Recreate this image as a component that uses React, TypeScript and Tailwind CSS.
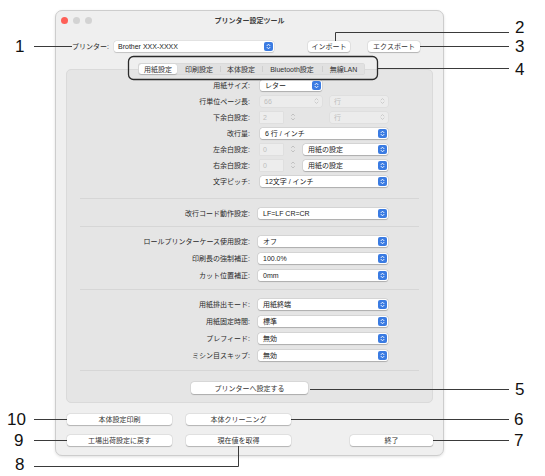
import React from "react";

const FONT = "font-['Liberation_Sans','Noto_Sans_CJK_JP',sans-serif]";

function BlueChev() {
  return (
    <span className="w-[9px] h-[9px] rounded-[2px] bg-[#3a7be2] flex items-center justify-center shrink-0">
      <svg width="5" height="7" viewBox="0 0 5 7">
        <path d="M1 2.7 L2.5 1.2 L4 2.7 M1 4.3 L2.5 5.8 L4 4.3" stroke="white" strokeWidth="0.9" fill="none" strokeLinecap="round" strokeLinejoin="round" />
      </svg>
    </span>
  );
}

function GrayChev() {
  return (
    <svg width="5" height="8" viewBox="0 0 5 8" className="shrink-0">
      <path d="M1 3 L2.5 1.5 L4 3 M1 5 L2.5 6.5 L4 5" stroke="#c4c4c4" strokeWidth="0.8" fill="none" strokeLinecap="round" strokeLinejoin="round" />
    </svg>
  );
}

function Popup({ text, cls }: { text: string; cls: string }) {
  return (
    <div className={`${cls} h-[11px] bg-white rounded-[2.5px] shadow-[0_0_0_0.5px_rgba(0,0,0,0.1),0_0.5px_1px_rgba(0,0,0,0.2)] flex items-center justify-between pl-[5px] pr-[1px]`}>
      <span className="text-[7px] leading-none text-[#222] whitespace-nowrap">{text}</span>
      <BlueChev />
    </div>
  );
}

function DisCombo({ text, cls }: { text: string; cls: string }) {
  return (
    <div className={`${cls} h-[11px] bg-[#ececec] rounded-[2px] shadow-[0_0_0_0.5px_rgba(0,0,0,0.05)] flex items-center justify-between pl-[4px] pr-[3px]`}>
      <span className="text-[7px] leading-none text-[#bdbdbd]">{text}</span>
      <GrayChev />
    </div>
  );
}

function Field({ text }: { text: string }) {
  return (
    <div className="w-[23px] h-[11px] bg-[#ededed] shadow-[0_0_0_0.5px_rgba(0,0,0,0.05)] flex items-center pl-[3px]">
      <span className="text-[7px] leading-none text-[#bdbdbd]">{text}</span>
    </div>
  );
}

function Stepper() {
  return (
    <div className="w-[7px] h-[11px] flex items-center justify-center">
      <svg width="6" height="10" viewBox="0 0 6 10">
        <path d="M1.5 3.5 L3 2 L4.5 3.5 M1.5 6.5 L3 8 L4.5 6.5" stroke="#b8b8b8" strokeWidth="0.8" fill="none" strokeLinecap="round" strokeLinejoin="round" />
      </svg>
    </div>
  );
}

function Row({ label, h, ml, children }: { label: string; h: string; ml: string; children: React.ReactNode }) {
  return (
    <div className={`flex items-center ${h}`}>
      <div className="w-[183px] text-right text-[7px] leading-none text-[#2a2a2a] whitespace-nowrap">{label}</div>
      <div className={`flex items-center ${ml}`}>{children}</div>
    </div>
  );
}

function Sep({ mt }: { mt: string }) {
  return <div className={`${mt} mx-[13px] h-px bg-[#d6d6d6]`} />;
}

function Btn({ text, cls }: { text: string; cls: string }) {
  return (
    <div className={`${cls} h-[11px] bg-white rounded-[3px] shadow-[0_0_0_0.5px_rgba(0,0,0,0.08),0_0.5px_1px_rgba(0,0,0,0.22)] flex items-center justify-center`}>
      <span className="text-[7px] leading-none text-[#333] whitespace-nowrap">{text}</span>
    </div>
  );
}

function Tab({ text, w, sel, divider }: { text: string; w: string; sel?: boolean; divider?: boolean }) {
  return (
    <div className={`${w} h-full relative flex items-center justify-center`}>
      {sel ? (
        <div className="absolute inset-[1px] bg-white rounded-[2.5px] shadow-[0_0.5px_1px_rgba(0,0,0,0.2)]" />
      ) : null}
      {divider ? <div className="absolute left-0 top-[3px] bottom-[3px] w-px bg-[#cfcfcf]" /> : null}
      <span className="relative text-[7px] leading-none text-[#333] whitespace-nowrap">{text}</span>
    </div>
  );
}

function Num({ n, x, y }: { n: string; x: number; y: number }) {
  return (
    <div
      className="absolute text-[17px] leading-none text-[#111] font-['Liberation_Sans',sans-serif]"
      style={{ left: x, top: y - 8.3 }}
    >
      {n}
    </div>
  );
}

export default function App() {
  return (
    <div className={`relative w-[545px] h-[476px] bg-white overflow-hidden ${FONT}`}>
      <div className="pt-[10px] pl-[55px]">
        <div className="w-[389px] h-[446px] bg-[#efefef] rounded-[7px] border border-[#cdcdcd] shadow-[0_1px_3px_rgba(0,0,0,0.12)] flex flex-col">
          {/* Title bar */}
          <div className="h-[19px] grid grid-cols-[1fr_auto_1fr] items-center">
            <div className="flex items-center gap-[5px] pl-[5px]">
              <span className="w-[7px] h-[7px] rounded-full bg-[#fe5f57]" />
              <span className="w-[7px] h-[7px] rounded-full bg-[#d3d3d3]" />
              <span className="w-[7px] h-[7px] rounded-full bg-[#d3d3d3]" />
            </div>
            <div className="text-[7px] leading-none font-semibold text-[#3a3a3a]">プリンター設定ツール</div>
            <div />
          </div>

          {/* Printer row */}
          <div className="mt-[11px] h-[11px] flex items-center">
            <div className="w-[53px] text-right text-[7px] leading-none text-[#2a2a2a]">プリンター:</div>
            <div className="ml-[5px] w-[160px] h-[11px] bg-white rounded-[2.5px] shadow-[0_0_0_0.5px_rgba(0,0,0,0.08),0_0.5px_1px_rgba(0,0,0,0.15)] flex items-center justify-between pl-[4px] pr-[1px]">
              <span className="text-[7px] leading-none text-[#222]">Brother XXX-XXXX</span>
              <BlueChev />
            </div>
            <Btn text="インポート" cls="ml-[34px] w-[42px]" />
            <Btn text="エクスポート" cls="ml-[18px] w-[52px]" />
          </div>

          {/* Tabs */}
          <div className="mt-[11px] ml-[82px] w-[227px] h-[12px] bg-[#e1e1e1] rounded-[3px] shadow-[inset_0_0_0_0.5px_rgba(0,0,0,0.06)] flex relative z-10">
            <Tab text="用紙設定" w="w-[40px]" sel />
            <Tab text="印刷設定" w="w-[42px]" />
            <Tab text="本体設定" w="w-[42px]" divider />
            <Tab text="Bluetooth設定" w="w-[60px]" divider />
            <Tab text="無線LAN" w="w-[43px]" divider />
          </div>

          {/* Box */}
          <div className="-mt-[6px] ml-[10px] w-[367px] bg-[#e5e5e5] rounded-[5px] border border-[#dadada] pt-[7px] pb-[8px] flex flex-col">
            <Row label="用紙サイズ:" h="h-[16px]" ml="ml-[10px]">
              <Popup text="レター" cls="w-[62px]" />
            </Row>
            <Row label="行単位ページ長:" h="h-[16px]" ml="ml-[10px]">
              <DisCombo text="66" cls="w-[62px]" />
              <DisCombo text="行" cls="ml-[8px] w-[58px]" />
            </Row>
            <Row label="下余白設定:" h="h-[16px]" ml="ml-[10px]">
              <Field text="2" />
              <div className="ml-[6px]"><Stepper /></div>
              <DisCombo text="行" cls="ml-[34px] w-[58px]" />
            </Row>
            <Row label="改行量:" h="h-[16px]" ml="ml-[10px]">
              <Popup text="6 行 / インチ" cls="w-[128px]" />
            </Row>
            <Row label="左余白設定:" h="h-[16px]" ml="ml-[10px]">
              <Field text="0" />
              <div className="ml-[6px]"><Stepper /></div>
              <Popup text="用紙の設定" cls="ml-[7px] w-[85px]" />
            </Row>
            <Row label="右余白設定:" h="h-[16px]" ml="ml-[10px]">
              <Field text="0" />
              <div className="ml-[6px]"><Stepper /></div>
              <Popup text="用紙の設定" cls="ml-[7px] w-[85px]" />
            </Row>
            <Row label="文字ピッチ:" h="h-[16px]" ml="ml-[10px]">
              <Popup text="12文字 / インチ" cls="w-[128px]" />
            </Row>

            <Sep mt="mt-[9px]" />
            <div className="mt-[6px]">
              <Row label="改行コード動作設定:" h="h-[16px]" ml="ml-[8px]">
                <Popup text="LF=LF CR=CR" cls="w-[130px]" />
              </Row>
            </div>

            <Sep mt="mt-[5px]" />
            <div className="mt-[6px]">
              <Row label="ロールプリンターケース使用設定:" h="h-[17px]" ml="ml-[8px]">
                <Popup text="オフ" cls="w-[130px]" />
              </Row>
              <Row label="印刷長の強制補正:" h="h-[17px]" ml="ml-[8px]">
                <Popup text="100.0%" cls="w-[130px]" />
              </Row>
              <Row label="カット位置補正:" h="h-[17px]" ml="ml-[8px]">
                <Popup text="0mm" cls="w-[130px]" />
              </Row>
            </div>

            <Sep mt="mt-[5px]" />
            <div className="mt-[6px]">
              <Row label="用紙排出モード:" h="h-[17px]" ml="ml-[8px]">
                <Popup text="用紙終端" cls="w-[130px]" />
              </Row>
              <Row label="用紙固定時間:" h="h-[17px]" ml="ml-[8px]">
                <Popup text="標準" cls="w-[130px]" />
              </Row>
              <Row label="プレフィード:" h="h-[17px]" ml="ml-[8px]">
                <Popup text="無効" cls="w-[130px]" />
              </Row>
              <Row label="ミシン目スキップ:" h="h-[17px]" ml="ml-[8px]">
                <Popup text="無効" cls="w-[130px]" />
              </Row>
            </div>

            <Sep mt="mt-[6px]" />
            <div className="mt-[11px] flex justify-center">
              <Btn text="プリンターへ設定する" cls="w-[117px] h-[12px]" />
            </div>
          </div>

          {/* Bottom buttons */}
          <div className="mt-[11px] ml-[11px] flex">
            <Btn text="本体設定印刷" cls="w-[105px]" />
            <Btn text="本体クリーニング" cls="ml-[14px] w-[105px]" />
          </div>
          <div className="mt-[10px] ml-[11px] flex">
            <Btn text="工場出荷設定に戻す" cls="w-[105px]" />
            <Btn text="現在値を取得" cls="ml-[14px] w-[105px]" />
            <Btn text="終了" cls="ml-[59px] w-[83px]" />
          </div>
        </div>
      </div>

      {/* Callouts overlay */}
      <svg className="absolute inset-0 pointer-events-none" width="545" height="476" viewBox="0 0 545 476">
        <g stroke="#3a3a3a" strokeWidth="1" fill="none">
          <rect x="128.5" y="56.5" width="249" height="23" rx="5" strokeWidth="1.3" stroke="#2a2a2a" />
          <path d="M34 46.5 H72" />
          <path d="M335.5 41 V32.5 H509" />
          <path d="M420 46.5 H509" />
          <path d="M378 68.5 H509" />
          <path d="M310 389.5 H509" />
          <path d="M291 419.5 H509" />
          <path d="M433 440.5 H509" />
          <path d="M238.5 446 V466.5 H34" />
          <path d="M34 440.5 H67" />
          <path d="M34 419.5 H67" />
        </g>
      </svg>
      <Num n="1" x={15} y={46} />
      <Num n="2" x={515} y={27} />
      <Num n="3" x={515} y={46} />
      <Num n="4" x={515} y={69} />
      <Num n="5" x={515} y={389} />
      <Num n="6" x={514} y={419} />
      <Num n="7" x={514} y={440} />
      <Num n="8" x={15} y={464} />
      <Num n="9" x={14} y={440} />
      <Num n="10" x={7} y={419} />
    </div>
  );
}
